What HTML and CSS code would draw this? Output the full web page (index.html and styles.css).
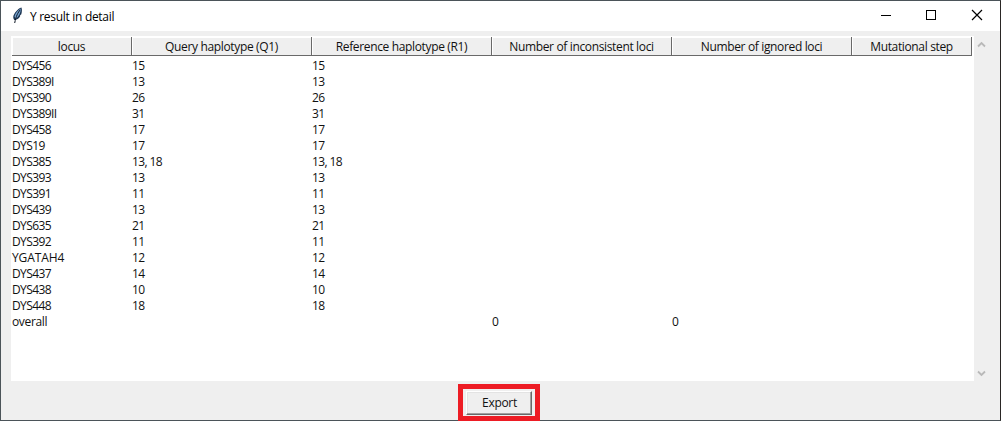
FILE: index.html
```html
<!DOCTYPE html>
<html lang="en">
<head>
<meta charset="utf-8">
<title>Y result in detail</title>
<link rel="stylesheet" href="styles.css">
</head>
<body>
<div class="window">
  <header class="titlebar">
    <svg class="feather" width="12" height="17" viewBox="0 0 12 17">
      <path d="M9.400 .4C6 1.400 1.800 6 1.300 9.600c-.2 1.600.3 2.700 1 3.400l.9.1c2-.5 4-2 5.200-4.400l-.6-.4 1.400-.9c.8-2.500 1-5 .2-7z" fill="#1b3350"/>
      <path d="M8.800 1.400C6 3 3.300 6 2.500 9.500L3.600 11.800C6.500 9.500 9 5.500 8.800 1.400z" fill="#78a5d2"/>
      <path d="M8.200 2.800C6 5.500 4 9 2.700 16" fill="none" stroke="#0b1422" stroke-width="1"/>
    </svg>
    <h1 class="title">Y result in detail</h1>
    <div class="controls">
      <svg width="46" height="30" viewBox="0 0 46 30"><path d="M18 14.500h10" class="glyph"/></svg>
      <svg width="46" height="30" viewBox="0 0 46 30"><rect x="17.500" y="9.500" width="9" height="9" class="glyph"/></svg>
      <svg width="46" height="30" viewBox="0 0 46 30"><path d="M17 9l10 10M27 9l-10 10" class="glyph cross"/></svg>
    </div>
  </header>
  <main class="content">
    <section class="tree">
      <div class="row head">
        <span>locus</span><span>Query haplotype (Q1)</span><span>Reference haplotype (R1)</span><span>Number of inconsistent loci</span><span>Number of ignored loci</span><span>Mutational step</span>
      </div>
      <div class="row"><span>DYS456</span><span>15</span><span>15</span></div>
      <div class="row"><span>DYS389I</span><span>13</span><span>13</span></div>
      <div class="row"><span>DYS390</span><span>26</span><span>26</span></div>
      <div class="row"><span>DYS389II</span><span>31</span><span>31</span></div>
      <div class="row"><span>DYS458</span><span>17</span><span>17</span></div>
      <div class="row"><span>DYS19</span><span>17</span><span>17</span></div>
      <div class="row"><span>DYS385</span><span>13, 18</span><span>13, 18</span></div>
      <div class="row"><span>DYS393</span><span>13</span><span>13</span></div>
      <div class="row"><span>DYS391</span><span>11</span><span>11</span></div>
      <div class="row"><span>DYS439</span><span>13</span><span>13</span></div>
      <div class="row"><span>DYS635</span><span>21</span><span>21</span></div>
      <div class="row"><span>DYS392</span><span>11</span><span>11</span></div>
      <div class="row"><span class="wide">YGATAH4</span><span>12</span><span>12</span></div>
      <div class="row"><span>DYS437</span><span>14</span><span>14</span></div>
      <div class="row"><span>DYS438</span><span>10</span><span>10</span></div>
      <div class="row"><span>DYS448</span><span>18</span><span>18</span></div>
      <div class="row"><span class="label">overall</span><span></span><span></span><span>0</span><span>0</span></div>
    </section>
    <div class="scrollbar">
      <svg width="9" height="7" viewBox="0 0 9 7"><path d="M1 5.500l3.500-3.500L8 5.500" class="arrow"/></svg>
      <svg width="9" height="7" viewBox="0 0 9 7"><path d="M1 1.500l3.500 3.500L8 1.500" class="arrow"/></svg>
    </div>
  </main>
  <footer class="footer"><div class="highlight"><button class="export">Export</button></div></footer>
</div>
</body>
</html>
```

FILE: styles.css
```css
* { box-sizing: border-box; }
body { margin: 0; font: 12px/16px "Open Sans", "Noto Sans", sans-serif; color: #111; }
.window {
  width: 1001px; height: 421px;
  display: flex; flex-direction: column;
  background: #efefef;
  border: 1px solid #4b5459;
  border-right-color: #2a2725;
}
.titlebar { height: 30px; flex: none; display: flex; align-items: center; padding-left: 11px; background: #fff; }
.feather { flex: none; margin-top: -2px; }
.title { margin: 0 auto 0 6px; padding-top: 1px; font-size: 12px; font-weight: 400; letter-spacing: -0.3px; color: #000; }
.controls { display: flex; height: 30px; margin-right: -1px; }
.glyph { fill: none; stroke: #000; stroke-width: 1; }
.cross { stroke-width: 1.200; }
.content { display: flex; height: 350px; padding: 5px 0 0 10px; flex: none; }
.tree { width: 963px; height: 345px; padding-left: 1px; background: #fff; }
.row { display: grid; grid-template-columns: 120px 180px 180px 180px 180px 120px; height: 16px; white-space: nowrap; letter-spacing: -0.6px; }
.wide { letter-spacing: -0.1px; }
.label { letter-spacing: -0.35px; }
.head { height: 20px; margin-bottom: 2px; padding-top: 1px; text-align: center; letter-spacing: -0.35px; }
.head span { height: 19px; line-height: 19px; background: #efefef; border-right: 1px solid #696969; border-bottom: 1px solid #696969; box-shadow: inset 1px 1px #fff; }
.scrollbar { width: 15px; display: flex; flex-direction: column; align-items: center; justify-content: space-between; padding: 5px 0 4px; }
.arrow { fill: none; stroke: #b9b9b9; stroke-width: 1.800; }
.footer { display: flex; justify-content: center; padding-top: 3px; }
.highlight { width: 82px; height: 37px; border: 5px solid #ed1c24; display: flex; padding: 2px 3px; margin-right: 3px; }
.export { width: 68px; height: 24px; margin: 0; padding: 0 0 0 1px; font: inherit; line-height: 20px; letter-spacing: -0.3px; color: #111; background: #efefef; border: 1px solid; border-color: #fff #696969 #696969 #fff; box-shadow: inset -1px -1px #a0a0a0, inset 1px 1px #e3e3e3; }
```
